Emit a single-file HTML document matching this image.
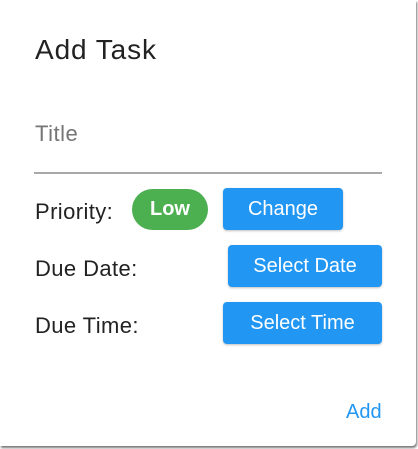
<!DOCTYPE html>
<html><head><style>
body{margin:0;width:418px;height:449px;overflow:hidden;background:#fff;font-family:"Liberation Sans",sans-serif;position:relative}
.d{position:absolute;left:0;top:0;width:416px;height:446px;background:#fff;border-bottom-right-radius:4px;box-shadow:1px 2px 2px #777}
.a{position:absolute;white-space:nowrap}
.b{position:absolute;background:#2196F3;color:#fff;border-radius:4px;font-size:20px;display:flex;align-items:center;justify-content:center;box-shadow:0 1px 2px rgba(0,0,0,.25)}
.l{font-size:22px;color:#222;letter-spacing:0.4px}
</style></head><body>
<div class="d"></div>
<div class="a" style="left:35px;top:34px;font-size:28px;color:#222;letter-spacing:0.9px">Add Task</div>
<div class="a" style="left:35px;top:121px;font-size:22px;color:#757575;letter-spacing:0.5px">Title</div>
<div class="a" style="left:34px;top:172px;width:348px;height:2px;background:#a8a8a8"></div>
<div class="a l" style="left:35px;top:199px">Priority:</div>
<div class="a" style="left:132px;top:189px;width:76px;height:41px;border-radius:21px;background:#4CAF50;color:#fff;font-weight:bold;font-size:20px;display:flex;align-items:center;justify-content:center">Low</div>
<div class="b" style="left:223px;top:188px;width:120px;height:42px">Change</div>
<div class="a l" style="left:35px;top:256px">Due Date:</div>
<div class="b" style="left:228px;top:245px;width:154px;height:42px">Select Date</div>
<div class="a l" style="left:35px;top:313px">Due Time:</div>
<div class="b" style="left:223px;top:302px;width:159px;height:42px">Select Time</div>
<div class="a" style="left:346px;top:401px;font-size:20px;color:#2196F3">Add</div>
</body></html>
